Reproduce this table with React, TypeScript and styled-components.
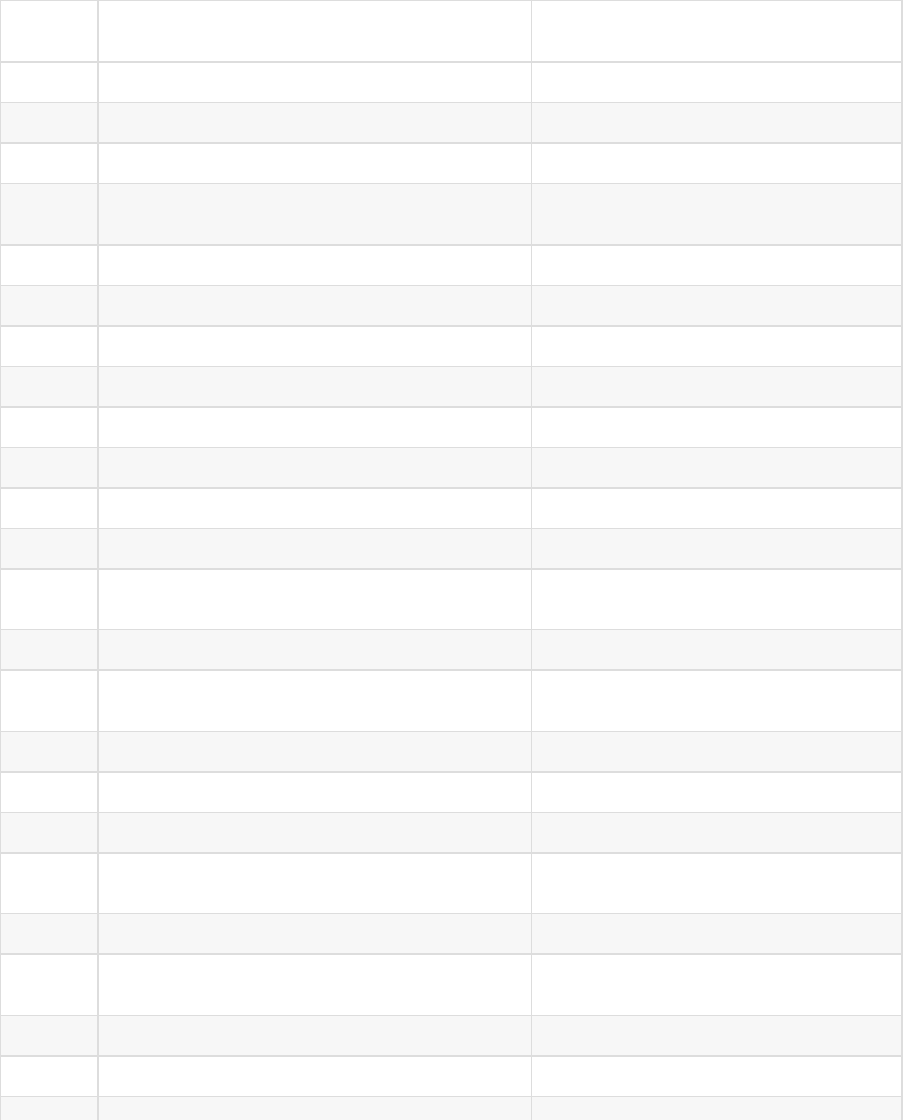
import * as React from "react";
import styled, { createGlobalStyle } from "styled-components";

const GlobalStyle = createGlobalStyle`
  html, body {
    margin: 0;
    padding: 0;
    background: #ffffff;
    font-family: "Liberation Sans", Arial, sans-serif;
    font-size: 14px;
    color: #333333;
  }
`;

const Table = styled.table`
  width: 903px;
  table-layout: fixed;
  border-collapse: separate;
  border-spacing: 0;
`;

const Col = styled.col<{ $width: number }>`
  width: ${(p) => p.$width}px;
`;

const HeadRow = styled.tr`
  height: 63px;
  background: #ffffff;
`;

const HeadCell = styled.th<{ $edge: number }>`
  padding: 0;
  border-top: 1px solid #dddddd;
  border-bottom: 2px solid #dddddd;
  border-right: ${(p) => p.$edge}px solid #dddddd;
  font-weight: 700;
  text-align: left;

  &:first-child {
    border-left: 1px solid #dddddd;
  }
`;

const Row = styled.tr<{ $striped: boolean; $height: number }>`
  height: ${(p) => p.$height}px;
  background: ${(p) => (p.$striped ? "#f7f7f7" : "#ffffff")};

  td {
    border-bottom: ${(p) => (p.$striped ? 2 : 1)}px solid #dddddd;
  }
`;

const Cell = styled.td<{ $edge: number }>`
  padding: 0;
  border-right: ${(p) => p.$edge}px solid #dddddd;
  vertical-align: top;

  &:first-child {
    border-left: 1px solid #dddddd;
  }
`;

const rowHeights = [
  40, 41, 40, 62, 40, 41, 40, 41, 40, 41, 40, 41,
  60, 41, 61, 41, 40, 41, 60, 41, 61, 41, 40, 41,
];
const columns = [
  { width: 99, edge: 2 },
  { width: 433, edge: 1 },
  { width: 371, edge: 2 },
];

export default function App() {
  return (
    <>
      <GlobalStyle />
      <Table>
        <colgroup>
          {columns.map((c, i) => (
            <Col key={i} $width={c.width} />
          ))}
        </colgroup>
        <thead>
          <HeadRow>
            {columns.map((c, i) => (
              <HeadCell key={i} $edge={c.edge} />
            ))}
          </HeadRow>
        </thead>
        <tbody>
          {rowHeights.map((h, n) => (
            <Row key={n} $striped={n % 2 === 1} $height={h}>
              {columns.map((c, i) => (
                <Cell key={i} $edge={c.edge} />
              ))}
            </Row>
          ))}
        </tbody>
      </Table>
    </>
  );
}
